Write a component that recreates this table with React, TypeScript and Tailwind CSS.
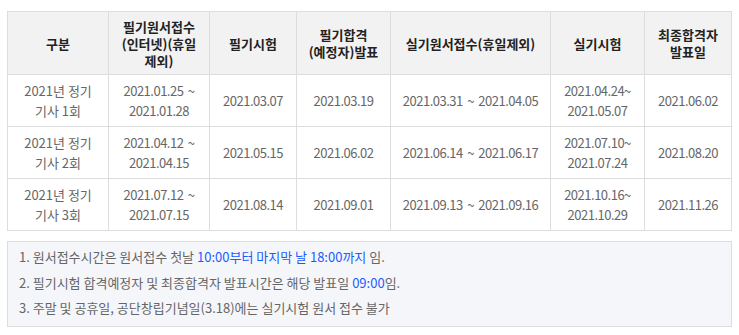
import React from "react";

const headers: React.ReactNode[] = [
  "구분",
  <>필기원서접수<br />(인터넷)(휴일<br />제외)</>,
  "필기시험",
  <>필기합격<br />(예정자)발표</>,
  "실기원서접수(휴일제외)",
  "실기시험",
  <>최종합격자<br />발표일</>,
];

const rows: React.ReactNode[][] = [
  [
    <>2021년 정기<br />기사 1회</>,
    <>2021.01.25 ~<br />2021.01.28</>,
    "2021.03.07",
    "2021.03.19",
    "2021.03.31 ~ 2021.04.05",
    <>2021.04.24~<br />2021.05.07</>,
    "2021.06.02",
  ],
  [
    <>2021년 정기<br />기사 2회</>,
    <>2021.04.12 ~<br />2021.04.15</>,
    "2021.05.15",
    "2021.06.02",
    "2021.06.14 ~ 2021.06.17",
    <>2021.07.10~<br />2021.07.24</>,
    "2021.08.20",
  ],
  [
    <>2021년 정기<br />기사 3회</>,
    <>2021.07.12 ~<br />2021.07.15</>,
    "2021.08.14",
    "2021.09.01",
    "2021.09.13 ~ 2021.09.16",
    <>2021.10.16~<br />2021.10.29</>,
    "2021.11.26",
  ],
];

const widths = [101, 101, 87, 94, 160, 94, 87];

export default function App() {
  return (
    <div
      className="w-[739px] h-[335px] bg-white pl-[7px] pt-[11px]"
      style={{ fontFamily: '"Noto Sans CJK KR", "Noto Sans", sans-serif' }}
    >
      <table className="table-fixed border-collapse w-[725px] text-[13px]">
        <colgroup>
          {widths.map((w, i) => (
            <col key={i} style={{ width: w }} />
          ))}
        </colgroup>
        <thead>
          <tr className="h-[63px]">
            {headers.map((h, i) => (
              <th
                key={i}
                className="border border-[#dddddd] bg-[#f2f2f2] text-[#222] font-bold leading-[17px] text-center align-middle px-1 py-0"
              >
                {h}
              </th>
            ))}
          </tr>
        </thead>
        <tbody>
          {rows.map((r, ri) => (
            <tr key={ri} className="h-[52px]">
              {r.map((c, ci) => (
                <td
                  key={ci}
                  className={
                    ci === 0
                      ? "border border-[#dddddd] text-[#666] leading-[20px] text-center align-middle px-1 py-0"
                      : "border border-[#dddddd] text-[#666] leading-[20px] tracking-[-0.5px] [word-spacing:2px] text-center align-middle px-1 py-0"
                  }
                >
                  {c}
                </td>
              ))}
            </tr>
          ))}
        </tbody>
      </table>
      <div className="mt-[10px] w-[725px] h-[86px] border border-[#dddddd] bg-[#f5f6fa] pl-[11px] pt-[2px] text-[13px] text-[#666] leading-[25.5px]">
        <p>
          1. 원서접수시간은 원서접수 첫날 <span className="text-[#1a5cff]">10:00부터 마지막 날 18:00까지</span> 임.
        </p>
        <p>
          2. 필기시험 합격예정자 및 최종합격자 발표시간은 해당 발표일 <span className="text-[#1a5cff]">09:00</span>임.
        </p>
        <p>3. 주말 및 공휴일, 공단창립기념일(3.18)에는 실기시험 원서 접수 불가</p>
      </div>
    </div>
  );
}
